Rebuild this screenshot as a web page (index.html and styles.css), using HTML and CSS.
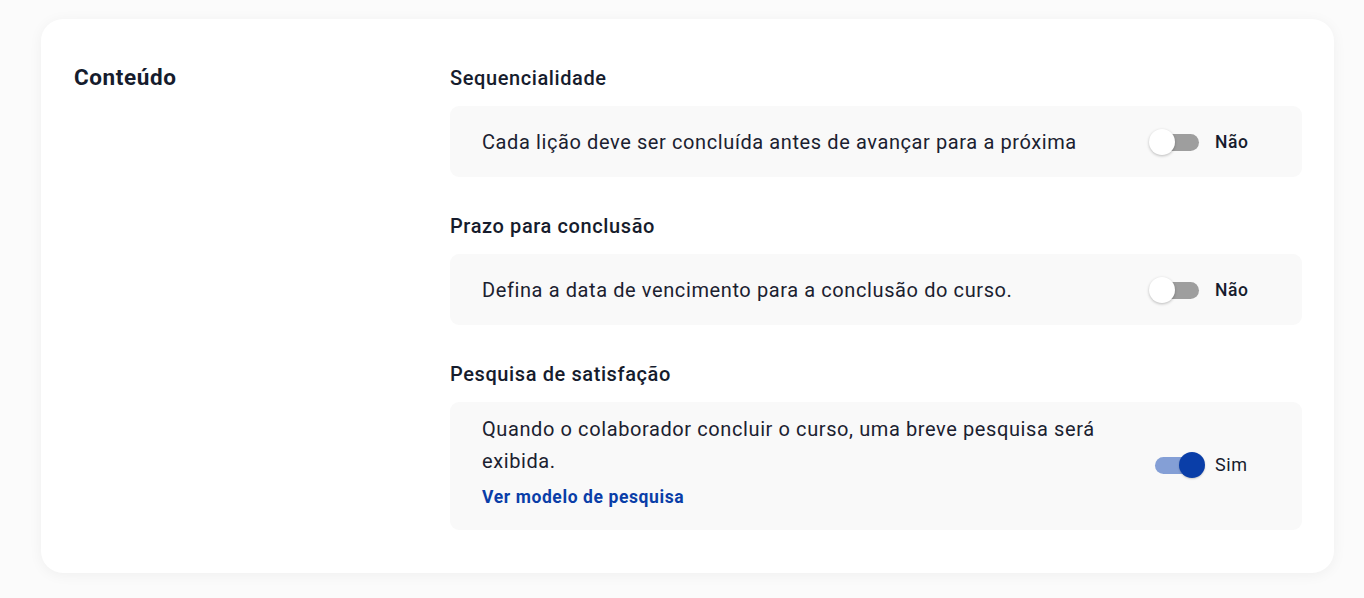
FILE: index.html
```html
<!DOCTYPE html>
<html lang="pt-BR">
<head>
    <meta charset="UTF-8">
    <meta name="viewport" content="width=device-width, initial-scale=1.0">
    <title>Conteúdo</title>
    <link rel="stylesheet" href="styles.css">
</head>
<body>
    <div class="card">
        <h2 class="card-title">Conteúdo</h2>

        <div class="settings">
            <section class="setting">
                <h3>Sequencialidade</h3>
                <div class="setting-row">
                    <div class="setting-text">
                        <p>Cada lição deve ser concluída antes de avançar para a próxima</p>
                    </div>
                    <label class="toggle">
                        <span class="switch"><span class="track"></span><span class="knob"></span></span>
                        <span class="toggle-label off">Não</span>
                    </label>
                </div>
            </section>

            <section class="setting">
                <h3>Prazo para conclusão</h3>
                <div class="setting-row">
                    <div class="setting-text">
                        <p>Defina a data de vencimento para a conclusão do curso.</p>
                    </div>
                    <label class="toggle">
                        <span class="switch"><span class="track"></span><span class="knob"></span></span>
                        <span class="toggle-label off">Não</span>
                    </label>
                </div>
            </section>

            <section class="setting">
                <h3>Pesquisa de satisfação</h3>
                <div class="setting-row tall">
                    <div class="setting-text">
                        <p>Quando o colaborador concluir o curso, uma breve pesquisa será exibida.</p>
                        <a href="#" class="link">Ver modelo de pesquisa</a>
                    </div>
                    <label class="toggle">
                        <span class="switch on"><span class="track"></span><span class="knob"></span></span>
                        <span class="toggle-label">Sim</span>
                    </label>
                </div>
            </section>
        </div>
    </div>
</body>
</html>
```

FILE: styles.css
```css
body {
    font-family: Roboto, "Noto Sans", Arial, sans-serif;
    letter-spacing: 0.6px;
    margin: 0;
    padding: 19px 30px 25px 41px;
    background-color: #fbfbfb;
    color: #161c2d;
}
.card {
    display: flex;
    background: #fff;
    border-radius: 22px;
    box-shadow: 0 2px 14px rgba(0, 0, 0, 0.05);
    padding: 47px 32px 43px 33px;
}
.card-title {
    width: 376px;
    flex-shrink: 0;
    margin: -3px 0 0;
    font-size: 22.5px;
    font-weight: 700;
    line-height: 28px;
}
.settings {
    flex: 1;
    display: flex;
    flex-direction: column;
    gap: 37px;
}
.setting h3 {
    margin: 0 0 16px;
    font-size: 20px;
    font-weight: 500;
    line-height: 24px;
}
.setting-row {
    display: flex;
    align-items: center;
    min-height: 71px;
    box-sizing: border-box;
    padding: 12px 53px 12px 32px;
    background: #f9f9f9;
    border-radius: 9px;
}
.setting-row.tall {
    padding-top: 11px;
    padding-bottom: 13px;
}
.setting-text {
    flex: 1;
    padding-right: 40px;
}
.setting-text p {
    margin: 0;
    font-size: 20px;
    line-height: 32px;
    color: #1b2130;
}
.link {
    display: block;
    margin: 8px 0 8px;
    font-size: 17.5px;
    font-weight: 700;
    line-height: 24px;
    color: #0a3ea8;
    text-decoration: none;
}
.toggle {
    display: flex;
    align-items: center;
    gap: 10px;
    width: 100px;
}
.switch {
    position: relative;
    display: block;
    width: 56px;
    height: 26px;
}
.track {
    position: absolute;
    left: 6px;
    right: 6px;
    top: 5px;
    height: 17px;
    border-radius: 9px;
    background: #9e9e9e;
}
.knob {
    position: absolute;
    left: 0;
    top: 0;
    width: 26px;
    height: 26px;
    border-radius: 50%;
    background: #fff;
    box-shadow: 0 1px 3px rgba(0, 0, 0, 0.25);
}
.switch.on .track {
    background: #849fd6;
}
.switch.on .knob {
    left: auto;
    right: 0;
    background: #0a3ea8;
    box-shadow: 0 1px 2px rgba(0, 0, 0, 0.2);
}
.toggle-label {
    font-size: 18px;
    line-height: 24px;
}
.toggle-label.off {
    font-size: 17.5px;
    font-weight: 500;
}
```
